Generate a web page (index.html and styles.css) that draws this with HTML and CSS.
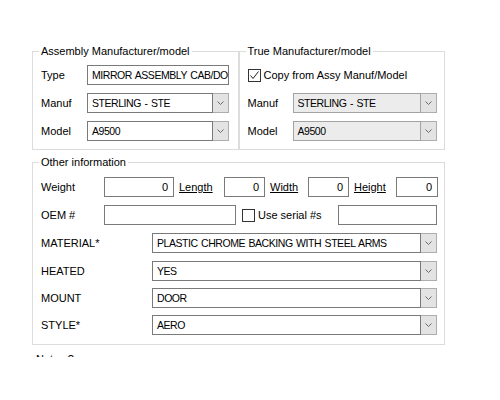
FILE: index.html
```html
<!DOCTYPE html>
<html lang="en">
<head>
    <meta charset="UTF-8">
    <title>Mirror details</title>
    <link rel="stylesheet" href="styles.css">
</head>
<body>

<div class="page">
    <div class="top-row">
        <!-- Assembly manufacturer -->
        <fieldset class="group group-half">
            <legend>Assembly Manufacturer/model</legend>
            <div class="row">
                <span class="label lbl-short">Type</span>
                <div class="field w-wide caps">MIRROR ASSEMBLY CAB/DO</div>
            </div>
            <div class="row">
                <span class="label lbl-short">Manuf</span>
                <div class="combo w-wide">
                    <div class="combo-text caps">STERLING - STE</div>
                    <div class="combo-btn"><svg width="7" height="4" viewBox="0 0 7 4"><polyline points="0.5,0.5 3.5,3.5 6.5,0.5" fill="none" stroke="#6a6a6a" stroke-width="1"/></svg></div>
                </div>
            </div>
            <div class="row">
                <span class="label lbl-short">Model</span>
                <div class="combo w-wide">
                    <div class="combo-text caps">A9500</div>
                    <div class="combo-btn"><svg width="7" height="4" viewBox="0 0 7 4"><polyline points="0.5,0.5 3.5,3.5 6.5,0.5" fill="none" stroke="#6a6a6a" stroke-width="1"/></svg></div>
                </div>
            </div>
        </fieldset>

        <!-- True manufacturer -->
        <fieldset class="group group-half">
            <legend>True Manufacturer/model</legend>
            <div class="row">
                <span class="check checked"><svg width="11" height="11" viewBox="0 0 11 11"><polyline points="1.5,5.5 4,8.5 9.5,1.5" fill="none" stroke="#222" stroke-width="1"/></svg></span>
                <span class="check-label">Copy from Assy Manuf/Model</span>
            </div>
            <div class="row">
                <span class="label lbl-right">Manuf</span>
                <div class="combo combo-off w-right">
                    <div class="combo-text caps">STERLING - STE</div>
                    <div class="combo-btn"><svg width="7" height="4" viewBox="0 0 7 4"><polyline points="0.5,0.5 3.5,3.5 6.5,0.5" fill="none" stroke="#6a6a6a" stroke-width="1"/></svg></div>
                </div>
            </div>
            <div class="row">
                <span class="label lbl-right">Model</span>
                <div class="combo combo-off w-right">
                    <div class="combo-text caps">A9500</div>
                    <div class="combo-btn"><svg width="7" height="4" viewBox="0 0 7 4"><polyline points="0.5,0.5 3.5,3.5 6.5,0.5" fill="none" stroke="#6a6a6a" stroke-width="1"/></svg></div>
                </div>
            </div>
        </fieldset>
    </div>

    <!-- Other information -->
    <fieldset class="group group-full">
        <legend>Other information</legend>
        <div class="row">
            <span class="label lbl-mid">Weight</span>
            <div class="field num w-weight">0</div>
            <a class="dim dim-length">Length</a>
            <div class="field num w-41">0</div>
            <a class="dim dim-width">Width</a>
            <div class="field num w-41">0</div>
            <a class="dim dim-height">Height</a>
            <div class="field num w-42">0</div>
        </div>
        <div class="row">
            <span class="label lbl-mid">OEM #</span>
            <div class="field w-oem"></div>
            <span class="check check-serial"></span>
            <span class="check-label">Use serial #s</span>
            <div class="field w-serial"></div>
        </div>
        <div class="row">
            <span class="label lbl-long">MATERIAL*</span>
            <div class="combo w-attr">
                <div class="combo-text caps">PLASTIC CHROME BACKING WITH STEEL ARMS</div>
                <div class="combo-btn"><svg width="7" height="4" viewBox="0 0 7 4"><polyline points="0.5,0.5 3.5,3.5 6.5,0.5" fill="none" stroke="#6a6a6a" stroke-width="1"/></svg></div>
            </div>
        </div>
        <div class="row">
            <span class="label lbl-long">HEATED</span>
            <div class="combo w-attr">
                <div class="combo-text caps">YES</div>
                <div class="combo-btn"><svg width="7" height="4" viewBox="0 0 7 4"><polyline points="0.5,0.5 3.5,3.5 6.5,0.5" fill="none" stroke="#6a6a6a" stroke-width="1"/></svg></div>
            </div>
        </div>
        <div class="row tight">
            <span class="label lbl-long">MOUNT</span>
            <div class="combo w-attr">
                <div class="combo-text caps">DOOR</div>
                <div class="combo-btn"><svg width="7" height="4" viewBox="0 0 7 4"><polyline points="0.5,0.5 3.5,3.5 6.5,0.5" fill="none" stroke="#6a6a6a" stroke-width="1"/></svg></div>
            </div>
        </div>
        <div class="row tight">
            <span class="label lbl-long">STYLE*</span>
            <div class="combo w-attr">
                <div class="combo-text caps">AERO</div>
                <div class="combo-btn"><svg width="7" height="4" viewBox="0 0 7 4"><polyline points="0.5,0.5 3.5,3.5 6.5,0.5" fill="none" stroke="#6a6a6a" stroke-width="1"/></svg></div>
            </div>
        </div>
    </fieldset>

    <div class="notes-peek"><span>Notes ?</span></div>
</div>

</body>
</html>
```

FILE: styles.css
```css
body {
    margin: 0;
    background-color: #fff;
    font-family: "Liberation Sans", Arial, sans-serif;
    font-size: 11px;
    color: #000;
}
.page {
    padding: 45px 0 0 32px;
    width: 413px;
}
.top-row {
    display: flex;
}
.group {
    border: 1px solid #dcdcdc;
    margin: 0;
    min-width: 0;
    box-sizing: border-box;
}
.group legend {
    padding: 0 2px;
    margin-left: -2px;
    line-height: 13px;
}
.group-half {
    width: 207px;
    padding: 7px 8px 8px 8px;
}
.group-full {
    width: 413px;
    margin-top: 6px;
    padding: 8px 7px 9px 8px;
}
.row {
    display: flex;
    align-items: center;
    height: 20px;
    margin-bottom: 8px;
}
.row:last-child {
    margin-bottom: 0;
}
.row.tight {
    margin-top: -1px;
}
.label {
    flex: none;
}
.lbl-short {
    width: 46px;
}
.lbl-right {
    width: 45px;
}
.lbl-mid {
    width: 63px;
}
.lbl-long {
    width: 111px;
}
.caps {
    font-size: 10.5px;
    letter-spacing: -0.45px;
    word-spacing: 1px;
}

/* text boxes */
.field {
    box-sizing: border-box;
    height: 20px;
    line-height: 18px;
    border: 1px solid #7a7a7a;
    background: #fff;
    padding: 0 4px;
    white-space: nowrap;
    overflow: hidden;
    flex: none;
}
.field.num {
    text-align: right;
    padding-right: 5px;
}
.w-wide { width: 142px; }
.w-right { width: 144px; }
.w-weight { width: 70px; }
.w-41 { width: 41px; }
.w-42 { width: 42px; }
.w-oem { width: 132px; }
.w-serial { width: 99px; margin-left: auto; }
.w-attr { width: 285px; }

/* combo boxes */
.combo {
    display: flex;
    height: 20px;
    flex: none;
}
.combo-text {
    flex: 1;
    box-sizing: border-box;
    border: 1px solid #7a7a7a;
    background: #fff;
    line-height: 18px;
    padding: 0 4px;
    white-space: nowrap;
    overflow: hidden;
}
.combo-btn {
    width: 16px;
    box-sizing: border-box;
    border: 1px solid #adadad;
    border-left: none;
    background: #e3e3e3;
    display: flex;
    align-items: center;
    justify-content: center;
}
.combo-off .combo-text {
    background: #ececec;
    border-color: #a3a3a3;
}

/* dimension links */
.dim {
    color: #000;
    text-decoration: underline;
    margin-left: 5px;
    flex: none;
}
.dim-length { width: 45px; }
.dim-width { width: 38px; }
.dim-height { width: 42px; }

/* checkboxes */
.check {
    width: 13px;
    height: 13px;
    box-sizing: border-box;
    border: 1px solid #333;
    background: #fff;
    display: inline-flex;
    align-items: center;
    justify-content: center;
    flex: none;
}
.check-label {
    margin-left: 3px;
}
.check-serial {
    margin-left: 6px;
}
.notes-peek {
    height: 4px;
    overflow: hidden;
    margin-top: 8px;
    padding-left: 4px;
    line-height: 13px;
}
```
